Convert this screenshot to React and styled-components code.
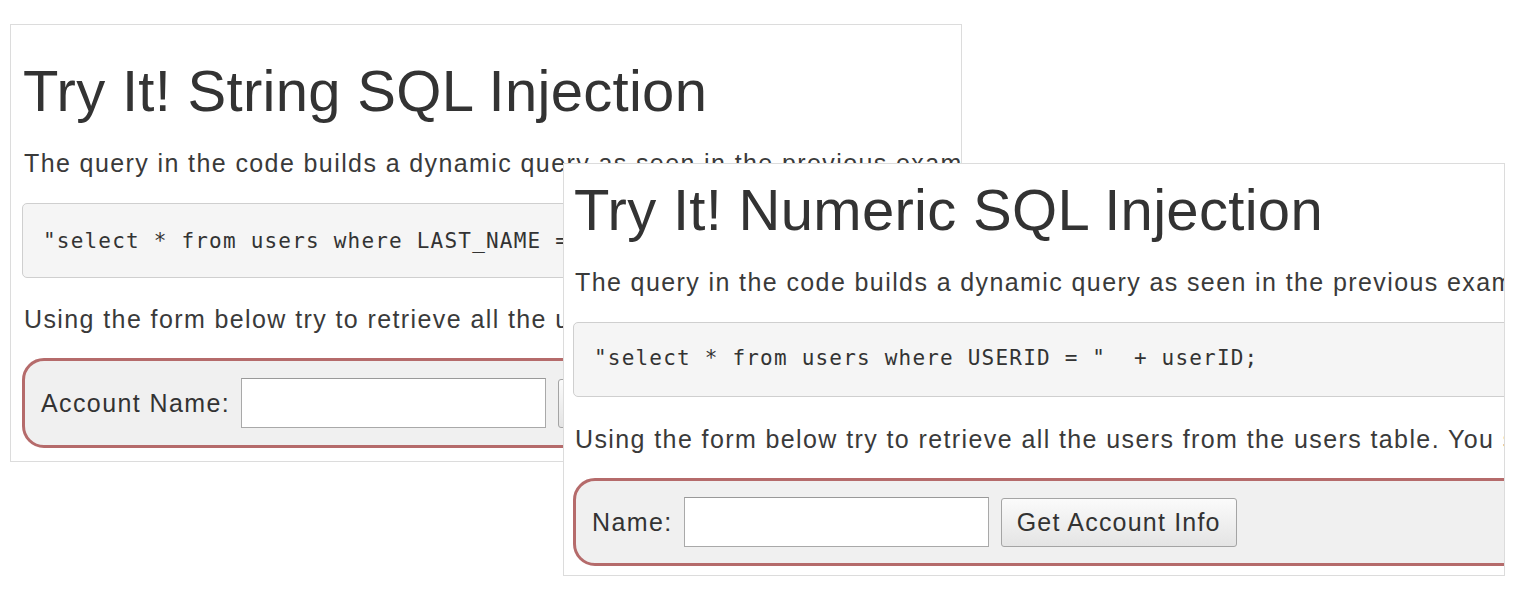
import React from 'react'
import styled, { createGlobalStyle } from 'styled-components'

const GlobalStyle = createGlobalStyle`
  html, body {
    margin: 0;
    padding: 0;
    background: #fff;
  }
  body {
    font-family: "Liberation Sans", Arial, sans-serif;
    color: #333;
  }
`

const lessons = [
  {
    id: 'string',
    title: 'Try It! String SQL Injection',
    intro: 'The query in the code builds a dynamic query as seen in the previous example. The query is built by concatenating strings making it susceptible to String SQL injection:',
    code: '"select * from users where LAST_NAME = \u2018" + userName + "\u2019";',
    task: 'Using the form below try to retrieve all the users from the users table. You shouldn\u2019t need to know any specific user name to get the complete list.',
    label: 'Account Name:',
    pos: { left: 10, top: 24, width: 952, height: 438 },
    pad: { top: 34, side: 11, bottom: 13 },
    gaps: { title: 23, intro: 23, code: 24, task: 22 },
    codePad: [22, 21],
    formPad: 17,
  },
  {
    id: 'numeric',
    title: 'Try It! Numeric SQL Injection',
    intro: 'The query in the code builds a dynamic query as seen in the previous example. The query in the code builds a dynamic query by concatenating a number making it susceptible to Numeric SQL injection:',
    code: '"select * from users where USERID = "  + userID;',
    task: 'Using the form below try to retrieve all the users from the users table. You shouldn\u2019t need to know any specific user name to get the complete list.',
    label: 'Name:',
    pos: { left: 563, top: 163, width: 942, height: 413 },
    pad: { top: 14, side: 9, bottom: 10 },
    gaps: { title: 23, intro: 23, code: 25, task: 22 },
    codePad: [20, 23],
    formPad: 16,
  },
]

const Desktop = () => (
  <Canvas>
    {lessons.map((lesson) => (
      <Window key={lesson.id} lesson={lesson} />
    ))}
  </Canvas>
)

const Window = ({ lesson }) => {
  const { pos, pad, gaps } = lesson
  return (
    <Shot
      $left={pos.left}
      $top={pos.top}
      $width={pos.width}
      $height={pos.height}
      $padTop={pad.top}
      $side={pad.side}
      $padBottom={pad.bottom}
    >
      <Title $gap={gaps.title}>{lesson.title}</Title>
      <Text $gap={gaps.intro}>{lesson.intro}</Text>
      <Code $gap={gaps.code} $padTop={lesson.codePad[0]} $padBottom={lesson.codePad[1]}>
        {lesson.code}
      </Code>
      <Text $gap={gaps.task}>{lesson.task}</Text>
      <AttackForm $pad={lesson.formPad} onSubmit={(e) => e.preventDefault()}>
        <Label>{lesson.label}</Label>
        <Field type="text" />
        <Submit type="submit">Get Account Info</Submit>
      </AttackForm>
    </Shot>
  )
}

export default function App() {
  return (
    <>
      <GlobalStyle />
      <Desktop />
    </>
  )
}

const Canvas = styled.div`
  position: relative;
  width: 1522px;
  height: 595px;
  overflow: hidden;
  background: #fff;
`

const Shot = styled.section`
  position: absolute;
  left: ${(p) => p.$left}px;
  top: ${(p) => p.$top}px;
  width: ${(p) => p.$width}px;
  height: ${(p) => p.$height}px;
  box-sizing: border-box;
  border: 1px solid #dcdcdc;
  background: #fff;
  overflow: hidden;
  padding: ${(p) => p.$padTop}px 0 ${(p) => p.$padBottom}px ${(p) => p.$side}px;
  display: flex;
  flex-direction: column;
  align-items: flex-start;
`

const Title = styled.h1`
  margin: 0 0 ${(p) => p.$gap}px 1px;
  font-family: "Liberation Sans", Arial, sans-serif;
  font-size: 58px;
  letter-spacing: 0.3px;
  line-height: 64px;
  font-weight: 400;
  color: #333;
  white-space: nowrap;
`

const Text = styled.p`
  margin: 0 0 ${(p) => p.$gap}px 2px;
  font-size: 25px;
  letter-spacing: 1.4px;
  line-height: 34px;
  color: #3a3a3a;
  white-space: nowrap;
`

const Code = styled.pre`
  margin: 0 0 ${(p) => p.$gap}px 0;
  width: 1200px;
  flex-shrink: 0;
  box-sizing: border-box;
  padding: ${(p) => p.$padTop}px 20px ${(p) => p.$padBottom}px;
  background: #f5f5f5;
  border: 1px solid #cfcfcf;
  border-radius: 5px;
  font-family: "DejaVu Sans Mono", "Liberation Mono", monospace;
  font-size: 21px;
  letter-spacing: 1.2px;
  line-height: 30px;
  color: #333;
  white-space: pre;
`

const AttackForm = styled.form`
  margin: 0;
  width: 1200px;
  flex-shrink: 0;
  box-sizing: border-box;
  display: flex;
  align-items: center;
  padding: ${(p) => p.$pad}px 16px;
  background: #f0f0f0;
  border: 3px solid #b56b6b;
  border-radius: 22px;
`

const Label = styled.label`
  font-size: 25px;
  letter-spacing: 1.4px;
  color: #333;
  margin-right: 11px;
  white-space: nowrap;
`

const Field = styled.input`
  width: 305px;
  height: 50px;
  box-sizing: border-box;
  margin: 0 12px 0 0;
  border: 1px solid #a9a9a9;
  border-top-color: #999;
  background: #fff;
  padding: 0 6px;
  font-family: "Liberation Sans", Arial, sans-serif;
  font-size: 22px;
`

const Submit = styled.button`
  height: 49px;
  box-sizing: border-box;
  padding: 0 15px;
  border: 1px solid #a4a4a4;
  border-radius: 3px;
  background: linear-gradient(#fbfbfb, #e4e4e4);
  font-family: "Liberation Sans", Arial, sans-serif;
  font-size: 25px;
  letter-spacing: 1.2px;
  color: #333;
  white-space: nowrap;
`
